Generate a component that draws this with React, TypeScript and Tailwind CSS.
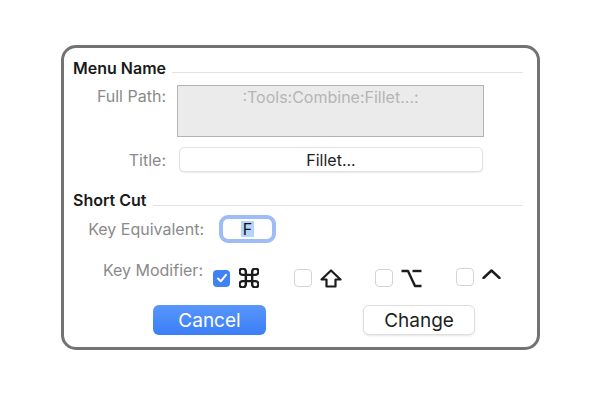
import type { ReactNode } from 'react';

const font = { fontFamily: 'Inter, "Liberation Sans", sans-serif' };

function CmdIcon() {
  return (
    <svg width="20" height="20" viewBox="2.5 2.5 19 19" fill="none" stroke="#1c1c1c" strokeWidth="2.3" strokeLinecap="round" strokeLinejoin="round">
      <path d="M15 6v12a3 3 0 1 0 3-3H6a3 3 0 1 0 3 3V6a3 3 0 1 0-3 3h12a3 3 0 1 0-3-3" />
    </svg>
  );
}

function ShiftIcon() {
  return (
    <svg width="22" height="19" viewBox="0 0 22 19" fill="none" stroke="#1c1c1c" strokeWidth="2.2" strokeLinejoin="round">
      <path d="M11 1.5 L20.5 10.5 H15.5 V17.5 H6.5 V10.5 H1.5 Z" />
    </svg>
  );
}

function OptionIcon() {
  return (
    <svg width="21" height="19" viewBox="0 0 21 19" fill="none" stroke="#1c1c1c" strokeWidth="2.4" strokeLinecap="butt" strokeLinejoin="round">
      <path d="M0.5 2 H7 L14 17 H20.5" />
      <path d="M11.5 2 H20.5" />
    </svg>
  );
}

function CaretIcon() {
  return (
    <svg width="19" height="10" viewBox="0 0 19 10" fill="none" stroke="#1c1c1c" strokeWidth="2.4" strokeLinecap="round" strokeLinejoin="round">
      <path d="M1.5 9 L9.5 1.5 L17.5 9" />
    </svg>
  );
}

function Check({ on }: { on?: boolean }) {
  if (on) {
    return (
      <div className="w-[17px] h-[17px] rounded-[4px] bg-[#3f82f6] flex items-center justify-center shrink-0">
        <svg width="12" height="12" viewBox="0 0 12 12" fill="none" stroke="white" strokeWidth="2" strokeLinecap="round" strokeLinejoin="round">
          <path d="M2 6.5 L4.8 9.3 L10 2.8" />
        </svg>
      </div>
    );
  }
  return <div className="w-[18px] h-[18px] rounded-[4px] border border-[#d4d4d4] bg-white shrink-0" />;
}

function Modifier({ on, icon, gap, top }: { on?: boolean; icon: ReactNode; gap: string; top?: boolean }) {
  return (
    <div className={`w-[81px] flex ${top ? 'items-start' : 'items-center'} ${gap}`}>
      <Check on={on} />
      <div className={top ? 'pt-[1px]' : ''}>{icon}</div>
    </div>
  );
}

export default function App() {
  return (
    <div className="w-[600px] h-[400px] bg-white pt-[45px] pl-[61px]" style={font}>
      <div className="w-[479px] h-[305px] border-[3px] border-[#737373] rounded-[15px] flex flex-col">
        {/* Menu Name */}
        <div className="mt-[11px] pl-[9px] pr-[14px] flex items-end h-[18px]">
          <span className="text-[16px] leading-[18px] font-semibold text-[#1a1a1a]">Menu Name</span>
          <div className="flex-1 h-px bg-[#e3e3e3] ml-[6px] mb-[4px]" />
        </div>

        <div className="mt-[8px] flex">
          <div className="w-[102px] text-right text-[16px] leading-[18px] text-[#8a8a8a] pt-[2px]">Full Path:</div>
          <div className="ml-[11px] w-[307px] h-[52px] bg-[#ebebeb] border-[1.5px] border-[#b3b3b3] text-center text-[16px] leading-[18px] text-[#b5b5b5] pt-[2px]">
            :Tools:Combine:Fillet...:
          </div>
        </div>

        <div className="mt-[10px] flex items-center">
          <div className="w-[102px] text-right text-[16px] leading-[18px] text-[#8a8a8a]">Title:</div>
          <div className="ml-[13px] w-[304px] h-[25px] rounded-[5px] border border-[#e2e2e2] shadow-[0_1px_1px_rgba(0,0,0,0.08)] bg-white flex items-center justify-center text-[16px] text-[#1e1e1e]">
            Fillet...
          </div>
        </div>

        {/* Short Cut */}
        <div className="mt-[19px] pl-[9px] pr-[14px] flex items-end h-[18px]">
          <span className="text-[16px] leading-[18px] font-semibold text-[#1a1a1a]">Short Cut</span>
          <div className="flex-1 h-px bg-[#e3e3e3] ml-[6px] mb-[3px]" />
        </div>

        <div className="mt-[6px] flex items-center">
          <div className="w-[140px] text-right text-[16px] leading-[18px] text-[#8a8a8a]">Key Equivalent:</div>
          <div className="ml-[15px] w-[57px] h-[28px] rounded-[9px] border-4 border-[#9ebcf6] bg-white flex items-center justify-center">
            <span className="bg-[#b5d4fd] px-[2px] text-[16px] leading-[16px] text-[#111]">F</span>
          </div>
        </div>

        <div className="mt-[18px] flex items-start h-[26px]">
          <div className="w-[140px] text-right text-[16px] leading-[18px] text-[#8a8a8a]">Key Modifier:</div>
          <div className="ml-[10px] mt-[7px] flex">
            <Modifier on icon={<CmdIcon />} gap="gap-[9px]" />
            <Modifier icon={<ShiftIcon />} gap="gap-[8px]" />
            <Modifier icon={<OptionIcon />} gap="gap-[8px]" />
            <Modifier icon={<CaretIcon />} gap="gap-[8px]" top />
          </div>
        </div>

        {/* Buttons */}
        <div className="mt-[18px] flex">
          <button className="ml-[89px] w-[113px] h-[30px] rounded-[6px] bg-gradient-to-b from-[#5896fa] to-[#3b7ef6] text-white text-[19px] leading-none">
            Cancel
          </button>
          <button className="ml-[97px] w-[112px] h-[30px] rounded-[6px] bg-white border border-[#dedede] shadow-[0_1px_2px_rgba(0,0,0,0.1)] text-[#1e1e1e] text-[19px] leading-none">
            Change
          </button>
        </div>
      </div>
    </div>
  );
}
